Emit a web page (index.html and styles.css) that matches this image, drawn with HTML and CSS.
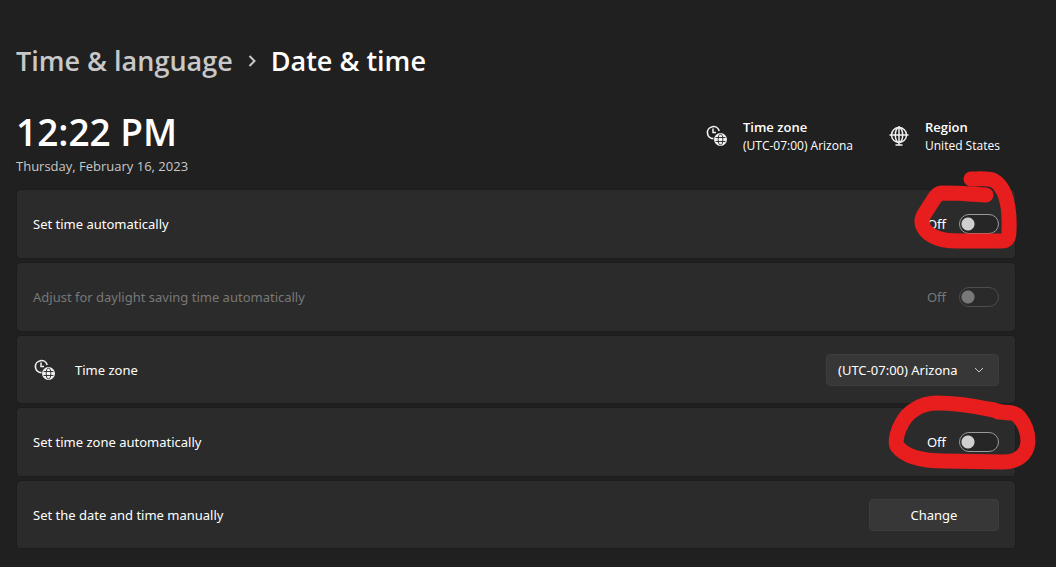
FILE: index.html
```html
<!DOCTYPE html>
<html lang="en">
<head>
  <meta charset="UTF-8">
  <title>Date &amp; time</title>
  <link rel="stylesheet" href="styles.css">
</head>
<body>
<svg class="defs" width="0" height="0" aria-hidden="true">
  <symbol id="icon-timezone" viewBox="0 0 22 22">
    <path d="M7.500 13.600A6 6 0 1 1 13.200 6" fill="none" stroke="currentColor" stroke-width="1.6"/>
    <path d="M7 3.500v4h3" fill="none" stroke="currentColor" stroke-width="1.500"/>
    <circle cx="14.500" cy="14.500" r="6.500" fill="currentColor"/>
    <g fill="none" stroke="#262626" stroke-width="0.9">
      <path d="M9.600 12.500h9.800M9.600 16.500h9.800"/>
      <ellipse cx="14.500" cy="14.500" rx="2.300" ry="5.300"/>
    </g>
  </symbol>
</svg>

<main class="page">
  <nav class="breadcrumb">
    <a href="#">Time &amp; language</a>
    <svg class="crumb-arrow" viewBox="0 0 10 12"><path d="M2.500 1L7.500 6l-5 5"/></svg>
    <h1>Date &amp; time</h1>
  </nav>

  <header class="summary">
    <div class="clock">
      <div class="clock-time">12:22 PM</div>
      <div class="clock-date">Thursday, February 16, 2023</div>
    </div>
    <div class="info info-zone">
      <svg class="icon"><use href="#icon-timezone"/></svg>
      <div>
        <div class="info-title">Time zone</div>
        <div class="info-text">(UTC-07:00) Arizona</div>
      </div>
    </div>
    <div class="info info-region">
      <svg class="icon" viewBox="0 0 22 22" fill="none" stroke="currentColor" stroke-width="1.500">
        <circle cx="11" cy="10" r="7.500"/>
        <ellipse cx="11" cy="10" rx="3.700" ry="7.500"/>
        <path d="M1.500 10h19M11 1v19M7.500 20h7"/>
      </svg>
      <div>
        <div class="info-title">Region</div>
        <div class="info-text">United States</div>
      </div>
    </div>
  </header>

  <section class="settings">
    <div class="row">
      <label class="row-label" for="autoTime">Set time automatically</label>
      <span class="state">Off</span>
      <input class="toggle" type="checkbox" id="autoTime">
      <svg class="mark mark-time" viewBox="0 0 120 90" aria-hidden="true">
        <path d="M81 30L64 29C54 28 44 28 37 28C33 28 31 31 29 34L20 48C13 58 19 68 32 73C40 76 46 76 56 76L96 76C102 76 104 73 104 66C105 42 101 22 88 15C82 13 73 14 66 14"/>
      </svg>
    </div>

    <div class="row disabled">
      <label class="row-label" for="autoDst">Adjust for daylight saving time automatically</label>
      <span class="state">Off</span>
      <input class="toggle" type="checkbox" id="autoDst" disabled>
    </div>

    <div class="row row-control">
      <svg class="icon"><use href="#icon-timezone"/></svg>
      <label class="row-label" for="zone">Time zone</label>
      <div class="select-box">
        <select class="control" id="zone">
          <option>(UTC-07:00) Arizona</option>
        </select>
        <svg class="select-arrow" viewBox="0 0 10 6"><path d="M1 1l4 4 4-4"/></svg>
      </div>
    </div>

    <div class="row">
      <label class="row-label" for="autoZone">Set time zone automatically</label>
      <span class="state">Off</span>
      <input class="toggle" type="checkbox" id="autoZone">
      <svg class="mark mark-zone" viewBox="0 0 155 80" aria-hidden="true">
        <path d="M127 20C118 21 113 17 103 16C84 12 66 10 52 10C35 10 22 20 17 30C12 38 10 49 12 53C20 64 38 68 60 68L118 69C132 69 142 62 143 49C143 40 140 31 134 24C130 19 122 19 113 19"/>
      </svg>
    </div>

    <div class="row row-control">
      <span class="row-label">Set the date and time manually</span>
      <button class="control change" type="button">Change</button>
    </div>
  </section>
</main>
</body>
</html>
```

FILE: styles.css
```css
* {
  box-sizing: border-box;
}
body {
  margin: 0;
  background: #202020;
  color: #fff;
  font-family: "Noto Sans", "Open Sans", sans-serif;
  font-size: 13px;
  line-height: 20px;
}
.defs {
  position: absolute;
}
.page {
  padding: 40px 41px 18px 17px;
}
.breadcrumb,
.summary {
  margin-left: -1px;
  font-family: "Open Sans", sans-serif;
}
.breadcrumb {
  display: flex;
  align-items: center;
  gap: 14px;
  font-size: 27px;
  line-height: 42px;
}
.breadcrumb a {
  color: #c8c8c8;
  font-weight: 600;
  text-decoration: none;
}
.breadcrumb h1 {
  margin: 0;
  font-size: 27px;
  font-weight: 600;
}
.crumb-arrow {
  width: 10px;
  height: 12px;
  fill: none;
  stroke: #c8c8c8;
  stroke-width: 2;
}
.summary {
  display: flex;
  align-items: flex-start;
  padding-top: 26px;
  height: 108px;
}
.clock {
  flex: 1;
}
.clock-time {
  font-size: 37px;
  font-weight: 600;
  line-height: 48px;
}
.clock-date {
  color: #c8c8c8;
}
.info {
  display: flex;
  align-items: center;
  gap: 15px;
  padding-top: 9px;
}
.info-zone {
  width: 182px;
}
.info-region {
  width: 127px;
}
.info-title {
  font-weight: 600;
}
.info-text {
  font-size: 12px;
  line-height: 18px;
}
.icon {
  width: 22px;
  height: 22px;
  color: #f0f0f0;
}
.settings {
  display: flex;
  flex-direction: column;
  gap: 5px;
}
.row {
  position: relative;
  display: flex;
  align-items: center;
  min-height: 68px;
  padding: 0 16px;
  background: #2b2b2b;
  border-radius: 4px;
  box-shadow: 0 0 0 1px #1d1d1d;
}
.row-control {
  min-height: 67px;
}
.row-label {
  flex: 1;
}
.row .icon {
  margin: 0 19px 0 1px;
}
.state {
  margin-right: 13px;
}
.disabled {
  color: #787878;
}
.toggle {
  appearance: none;
  width: 40px;
  height: 20px;
  margin: 0;
  border: 1px solid #9a9a9a;
  border-radius: 10px;
  background: radial-gradient(circle at 8px 9px, #cfcfcf 6px, transparent 7px) #262626;
}
.toggle:disabled {
  border-color: #4d4d4d;
  background: radial-gradient(circle at 8px 9px, #787878 6px, transparent 7px) #2a2a2a;
}
.control {
  height: 32px;
  border: 1px solid #3d3d3d;
  border-radius: 4px;
  background: #373737;
  color: #fff;
  font: inherit;
}
.select-box {
  display: grid;
  align-items: center;
}
.select-box > * {
  grid-area: 1 / 1;
}
.select-box select {
  appearance: none;
  width: 173px;
  padding: 0 30px 0 11px;
}
.select-arrow {
  justify-self: end;
  width: 10px;
  height: 6px;
  margin-right: 15px;
  fill: none;
  stroke: #c8c8c8;
  pointer-events: none;
}
.change {
  width: 130px;
}
/* red marker loops around the switches */
.mark {
  position: absolute;
  z-index: 1;
  fill: none;
  stroke: #e81e1e;
  stroke-width: 15;
  stroke-linecap: round;
  stroke-linejoin: round;
  pointer-events: none;
}
.mark-time {
  top: -25px;
  right: -10px;
  width: 120px;
  height: 90px;
}
.mark-zone {
  top: -15px;
  right: -25px;
  width: 155px;
  height: 80px;
}
```
